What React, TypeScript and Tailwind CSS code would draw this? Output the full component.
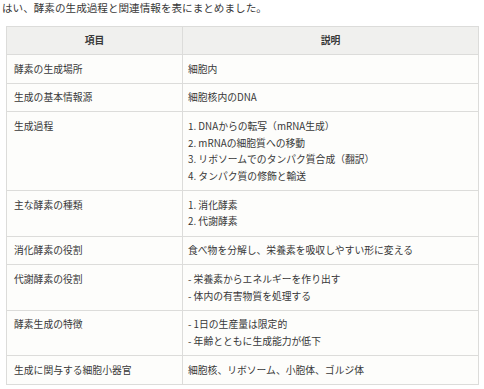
import React from 'react'

const rows: { item: string; desc: string[] }[] = [
  { item: '酵素の生成場所', desc: ['細胞内'] },
  { item: '生成の基本情報源', desc: ['細胞核内のDNA'] },
  {
    item: '生成過程',
    desc: [
      '1. DNAからの転写（mRNA生成）',
      '2. mRNAの細胞質への移動',
      '3. リボソームでのタンパク質合成（翻訳）',
      '4. タンパク質の修飾と輸送',
    ],
  },
  { item: '主な酵素の種類', desc: ['1. 消化酵素', '2. 代謝酵素'] },
  { item: '消化酵素の役割', desc: ['食べ物を分解し、栄養素を吸収しやすい形に変える'] },
  { item: '代謝酵素の役割', desc: ['- 栄養素からエネルギーを作り出す', '- 体内の有害物質を処理する'] },
  { item: '酵素生成の特徴', desc: ['- 1日の生産量は限定的', '- 年齢とともに生成能力が低下'] },
  { item: '生成に関与する細胞小器官', desc: ['細胞核、リボソーム、小胞体、ゴルジ体'] },
]

export default function App() {
  return (
    <div
      className="w-[484px] h-[389px] bg-white text-[#383838] overflow-hidden"
      style={{ fontFamily: '"Noto Sans CJK JP", "Noto Sans", sans-serif' }}
    >
      <p className="pl-[2px] pt-[0px] text-[10.6px] leading-[15px]">
        はい、酵素の生成過程と関連情報を表にまとめました。
      </p>
      <div className="ml-[6px] mt-[11px] w-[473px]">
        <table className="w-full border-collapse text-[9.8px] leading-[16.7px]">
          <thead>
            <tr className="bg-[#f0f0ee]">
              <th className="w-[176px] h-[28px] border border-[#dcdcda] font-bold text-center">項目</th>
              <th className="border border-[#dcdcda] font-bold text-center">説明</th>
            </tr>
          </thead>
          <tbody>
            {rows.map((row) => (
              <tr key={row.item} className="bg-[#fdfdfb]">
                <td className="border border-[#dcdcda] pl-[7px] py-[5.5px] align-top">{row.item}</td>
                <td className="border border-[#dcdcda] pl-[5px] py-[5.5px] align-top">
                  {row.desc.map((d) => (
                    <div key={d}>{d}</div>
                  ))}
                </td>
              </tr>
            ))}
          </tbody>
        </table>
      </div>
    </div>
  )
}
